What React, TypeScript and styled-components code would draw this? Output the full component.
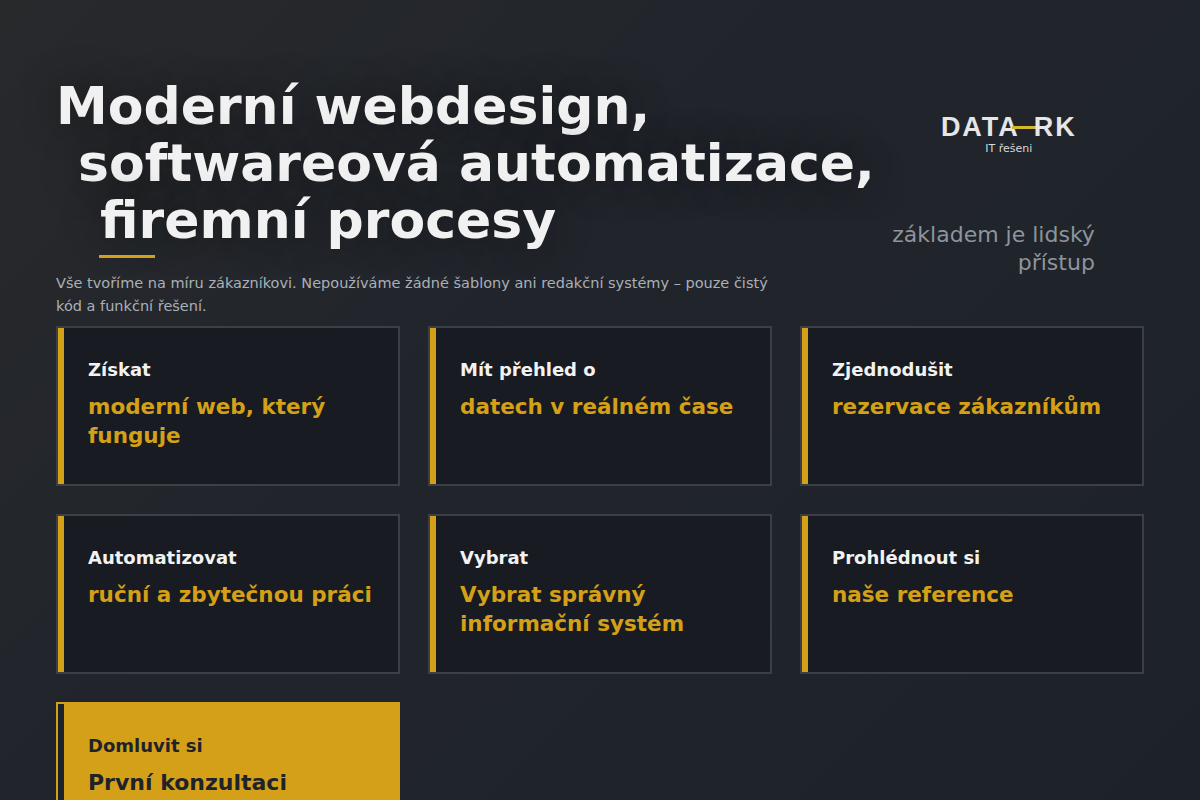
import React from "react";
import styled, { createGlobalStyle } from "styled-components";

const Global = createGlobalStyle`
  html, body { margin: 0; padding: 0; }
  body {
    background: linear-gradient(135deg, #28292b 0%, #21252b 40%, #1d222a 100%);
    min-height: 800px;
    font-family: "DejaVu Sans", sans-serif;
    overflow: hidden;
  }
`;

const Page = styled.div`
  padding: 78px 56px 0 56px;
`;

const Hero = styled.div`
  display: flex;
  justify-content: space-between;
`;

const HeroLeft = styled.div`
  display: flex;
  flex-direction: column;
`;

const Headline = styled.h1`
  margin: 0;
  font-size: 52px;
  line-height: 57px;
  font-weight: 700;
  color: #f1f1f1;
  text-shadow: 0 0 40px rgba(0, 0, 0, 0.45);
`;

const HeadLine = styled.span<{ $indent: number }>`
  display: block;
  padding-left: ${(p) => p.$indent}px;
  white-space: nowrap;
`;

const Underline = styled.div`
  width: 56px;
  height: 3px;
  background: #d4a017;
  margin: 6px 0 0 43px;
`;

const Sub = styled.p`
  margin: 14px 0 0 0;
  width: 712px;
  font-size: 14.5px;
  line-height: 23px;
  color: #aab0b8;
`;

const HeroRight = styled.div`
  display: flex;
  flex-direction: column;
  align-items: flex-end;
  padding: 36px 66px 0 0;
`;

const Logo = styled.div`
  display: flex;
  flex-direction: column;
  align-items: center;
  margin-right: 18px;
`;

const LogoWord = styled.div`
  display: flex;
  align-items: center;
  font-family: "Liberation Sans", sans-serif;
  font-size: 27px;
  font-weight: 700;
  color: #e6e6e6;
  letter-spacing: 2px;
  line-height: 26px;
`;

const LogoDash = styled.span`
  display: inline-block;
  width: 26px;
  height: 3px;
  background: #d4b72a;
  margin: 0 -4px 0 -8px;
`;

const LogoSub = styled.div`
  font-size: 11px;
  color: #d8d8d8;
  margin-top: 2px;
`;

const Tagline = styled.div`
  margin-top: 66px;
  font-size: 22px;
  line-height: 28px;
  color: #8e949c;
  text-align: right;
  width: 220px;
`;

const Grid = styled.div`
  display: grid;
  grid-template-columns: repeat(3, 344px);
  column-gap: 28px;
  row-gap: 28px;
  margin-top: 8px;
`;

const Card = styled.div<{ $accent?: boolean }>`
  height: 160px;
  box-sizing: border-box;
  border: 2px solid ${(p) => (p.$accent ? "#d4a017" : "#3b3f46")};
  background: ${(p) => (p.$accent ? "#d4a017" : "#181b21")};
  display: flex;
`;

const Bar = styled.div<{ $accent?: boolean }>`
  width: 6px;
  flex-shrink: 0;
  background: ${(p) => (p.$accent ? "#1e232b" : "#d4a017")};
`;

const CardBody = styled.div`
  padding: 31px 24px 0 24px;
`;

const Label = styled.div<{ $accent?: boolean }>`
  font-size: 18px;
  font-weight: 700;
  color: ${(p) => (p.$accent ? "#1e232b" : "#f2f2f2")};
`;

const Value = styled.div<{ $accent?: boolean }>`
  margin-top: 12px;
  font-size: ${(p) => (p.$accent ? "22px" : "21.5px")};
  line-height: 29px;
  font-weight: 700;
  color: ${(p) => (p.$accent ? "#1e232b" : "#d4a017")};
`;

const items = [
  { label: "Získat", value: "moderní web, který funguje" },
  { label: "Mít přehled o", value: "datech v reálném čase" },
  { label: "Zjednodušit", value: "rezervace zákazníkům" },
  { label: "Automatizovat", value: "ruční a zbytečnou práci" },
  { label: "Vybrat", value: "Vybrat správný informační systém" },
  { label: "Prohlédnout si", value: "naše reference" },
  { label: "Domluvit si", value: "První konzultaci", accent: true },
];

export default function App() {
  return (
    <Page>
      <Global />
      <Hero>
        <HeroLeft>
          <Headline>
            <HeadLine $indent={0}>Moderní webdesign,</HeadLine>
            <HeadLine $indent={22}>softwareová automatizace,</HeadLine>
            <HeadLine $indent={44}>firemní procesy</HeadLine>
          </Headline>
          <Underline />
          <Sub>
            Vše tvoříme na míru zákazníkovi. Nepoužíváme žádné šablony ani redakční systémy – pouze
            čistý kód a funkční řešení.
          </Sub>
        </HeroLeft>
        <HeroRight>
          <Logo>
            <LogoWord>
              DATA<LogoDash />RK
            </LogoWord>
            <LogoSub>IT řešeni</LogoSub>
          </Logo>
          <Tagline>základem je lidský přístup</Tagline>
        </HeroRight>
      </Hero>
      <Grid>
        {items.map((it) => (
          <Card key={it.label} $accent={it.accent}>
            <Bar $accent={it.accent} />
            <CardBody>
              <Label $accent={it.accent}>{it.label}</Label>
              <Value $accent={it.accent}>{it.value}</Value>
            </CardBody>
          </Card>
        ))}
      </Grid>
    </Page>
  );
}
